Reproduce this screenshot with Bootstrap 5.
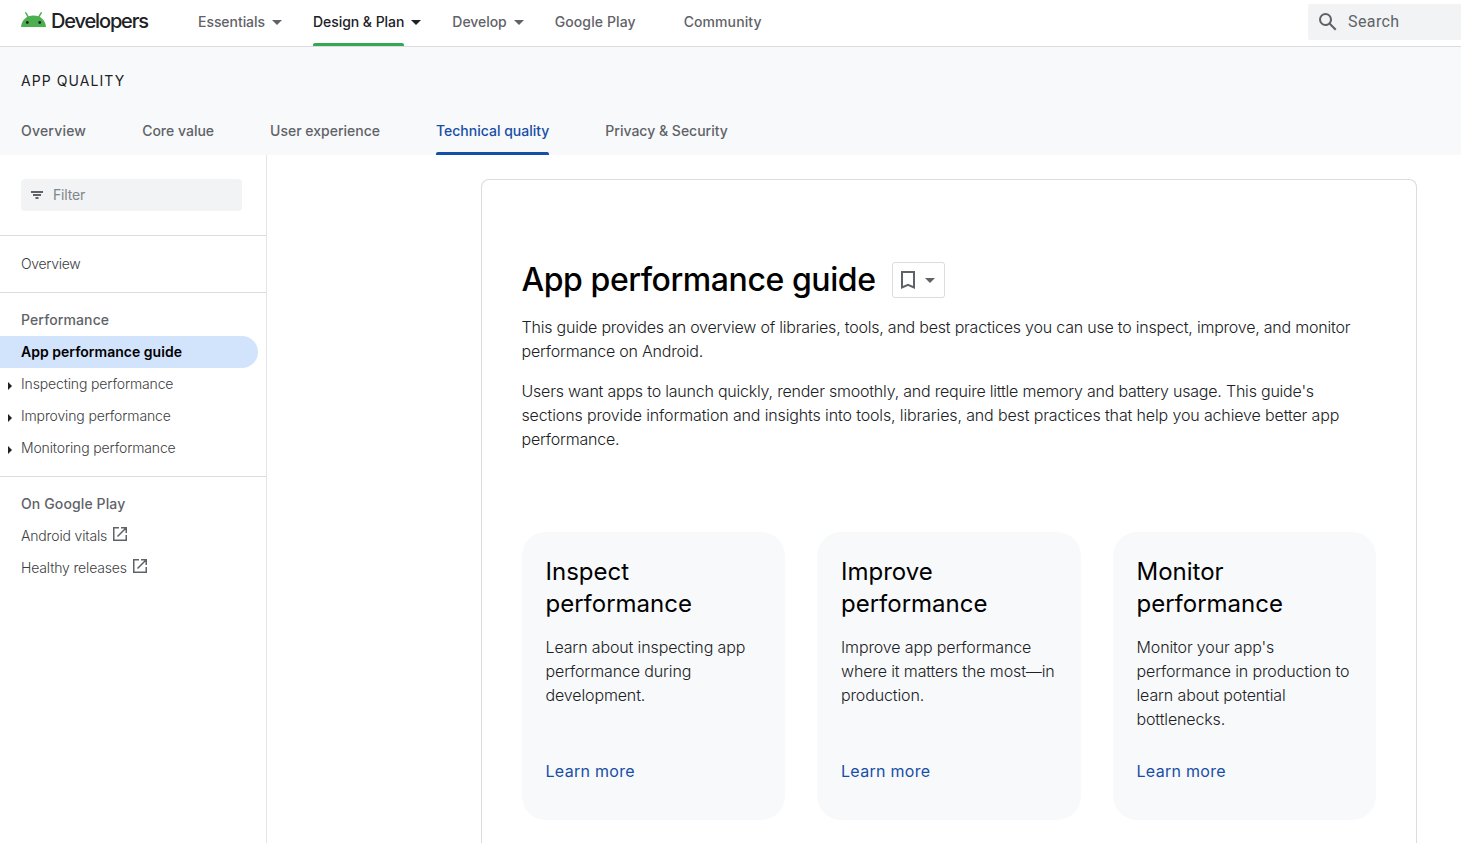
<!DOCTYPE html>
<html lang="en">
<head>
<meta charset="utf-8">
<meta name="viewport" content="width=device-width, initial-scale=1">
<title>App performance guide</title>
<link href="https://cdn.jsdelivr.net/npm/bootstrap@5.3.0/dist/css/bootstrap.min.css" rel="stylesheet">
<style>
body{font-family:Inter,"Liberation Sans",sans-serif;color:#202124;background:#fff;height:100vh;overflow:hidden;font-size:16px;line-height:24px}
a{color:inherit;text-decoration:none}
svg{display:block;flex:none}
.topbar{height:47px;border-bottom:1px solid #dadce0;padding-left:21px}
.brand{width:177px;height:40px;gap:5px;font-size:20px;font-weight:500;letter-spacing:-1.15px}
.brand svg{margin-top:-1px}
.brand span{padding-top:1px}
.tabs{gap:48px;font-size:14px;font-weight:500;color:#5f6368}
.tabs a{position:relative;display:flex;align-items:center;white-space:nowrap}
.topbar .tabs a{height:46px;padding-bottom:2px;letter-spacing:.1px}
.topbar .tabs .drop{letter-spacing:-.05px}
.topbar .tabs .drop::after{content:"";position:absolute;left:calc(100% + 7px);top:20px;border:5px solid transparent;border-top-color:currentColor;border-bottom:0}
.tabs .current::before{content:"";position:absolute;left:0;right:0;bottom:0;height:3px;border-radius:2px 2px 0 0;background:currentColor}
.topbar .tabs .current{color:#202124}
.topbar .tabs .current::before{background:#34a853}
.searchbox{width:153px;height:36px;margin-top:4px;background:#f1f3f4;border-radius:2px 0 0 2px;padding-left:8px;gap:8px;color:#5f6368;font-family:Roboto,sans-serif;letter-spacing:.4px}
.searchbox span{padding-bottom:1px}
.subbar{height:108px;background:#f8f9fb;padding:22px 21px 0}
.subbar h2{font-size:14px;line-height:24px;font-weight:400;letter-spacing:1.07px;margin:0 0 14px}
.subbar .tabs{gap:56px}
.subbar .tabs a{height:48px}
.subbar .tabs a:first-child{letter-spacing:.2px}
.subbar .tabs .current{color:#174ea6}
.side{width:267px;border-right:1px solid #e3e5e8;font-size:14px;color:#3c4043}
.filterbox{height:32px;margin:24px 24px 24px 21px;border-radius:4px;background:#f1f3f4;padding-left:8px;gap:8px;color:#80868b;letter-spacing:-.15px}
.side ul{border-top:1px solid #dadce0;padding:11px 0 12px}
.side ul:first-of-type{padding-top:12px;letter-spacing:-.3px}
.side li{height:32px;padding-left:21px;display:flex;align-items:center;position:relative;white-space:nowrap;font-weight:350;letter-spacing:-.16px}
.side ul:first-of-type li{letter-spacing:-.3px}
.side .group{font-weight:500;color:#5f6368;letter-spacing:.12px}
.side .active-page{background:#d2e3fc;color:#000;font-weight:600;border-radius:0 16px 16px 0;margin-right:8px;letter-spacing:.02px}
.side .expand{letter-spacing:-.14px}
.side .expand::before{content:"";position:absolute;left:8px;top:14px;border:4px solid transparent;border-left-color:#202124;border-right:0}
.side li svg{margin:-4px 0 0 5px}
.article{width:936px;margin:24px 0 0 214px;border:1px solid #dadce0;border-bottom:0;border-radius:8px 8px 0 0;padding:80px 40px 0 39.5px}
.article h1{font-size:32px;line-height:40px;font-weight:500;color:#000;margin:0;letter-spacing:-.43px}
.title-row{margin-bottom:15px}
.savebtn{width:53px;height:36px;border:1px solid #dadce0;border-radius:3px;background:#fff;color:#5f6368;padding:0 0 0 5px;margin-left:16px;gap:7px}
.caret-down{border:5px solid transparent;border-top-color:currentColor;border-bottom:0}
.article p{margin-bottom:16px;font-weight:300;letter-spacing:-.215px;white-space:nowrap}
.article p .wide{letter-spacing:-.135px}
.tiles{display:grid;grid-template-columns:repeat(3,1fr);gap:32px;padding-top:65px}
.tile{height:288px;border-radius:24px;background:#f8f9fb;padding:24px 24px 37px}
.tile h3{font-size:24px;line-height:32px;font-weight:400;color:#000;margin:0 0 15px}
.tile p{letter-spacing:-.13px}
.tile a{color:#174ea6;margin-top:auto;letter-spacing:.3px}
</style>
</head>
<body class="d-flex flex-column">
<header class="topbar d-flex flex-shrink-0 align-items-start">
  <a class="brand d-flex align-items-center" href="#">
    <svg width="25" height="15" viewBox="0 0 25 15"><path d="M4.800.9l2.900 4.800M20.200.9l-2.900 4.800" stroke="#4caf50" stroke-width="1.500" stroke-linecap="round"/><path d="M0 15C.6 8.200 5.500 3.500 12.500 3.500S24.400 8.200 25 15z" fill="#4caf50"/><circle cx="6.300" cy="10.500" r="1.400" fill="#202124"/><circle cx="18.700" cy="10.500" r="1.400" fill="#202124"/></svg>
    <span>Developers</span>
  </a>
  <nav class="tabs d-flex">
    <a class="drop" href="#">Essentials</a>
    <a class="drop current" href="#">Design &amp; Plan</a>
    <a class="drop" href="#">Develop</a>
    <a href="#">Google Play</a>
    <a href="#">Community</a>
  </nav>
  <div class="searchbox d-flex align-items-center ms-auto">
    <svg width="24" height="24" viewBox="0 0 24 24" fill="currentColor"><path d="M20.490 19l-5.730-5.730C15.530 12.200 16 10.910 16 9.500A6.500 6.500 0 1 0 9.500 16c1.410 0 2.700-.47 3.770-1.240L19 20.490 20.490 19zM5 9.500C5 7.010 7.010 5 9.500 5S14 7.010 14 9.500 11.990 14 9.500 14 5 11.990 5 9.500z"/></svg>
    <span>Search</span>
  </div>
</header>
<section class="subbar flex-shrink-0">
  <h2>APP QUALITY</h2>
  <nav class="tabs d-flex">
    <a href="#">Overview</a>
    <a href="#">Core value</a>
    <a href="#">User experience</a>
    <a class="current" href="#">Technical quality</a>
    <a href="#">Privacy &amp; Security</a>
  </nav>
</section>
<div class="d-flex flex-grow-1">
  <aside class="side flex-shrink-0">
    <div class="filterbox d-flex align-items-center">
      <svg width="16" height="16" viewBox="0 0 16 16" fill="#5f6368"><path d="M2 4h12v2H2zM4 7h8v2H4zM6.500 10h3v2h-3z"/></svg>
      <span>Filter</span>
    </div>
    <ul class="list-unstyled mb-0"><li>Overview</li></ul>
    <ul class="list-unstyled mb-0">
      <li class="group">Performance</li>
      <li class="active-page">App performance guide</li>
      <li class="expand">Inspecting performance</li>
      <li class="expand">Improving performance</li>
      <li class="expand">Monitoring performance</li>
    </ul>
    <ul class="list-unstyled mb-0">
      <li class="group">On Google Play</li>
      <li>Android vitals<svg width="16" height="16" viewBox="0 0 16 16" fill="none" stroke="#5f6368" stroke-width="1.500"><path d="M7 1.750H1.750v12.500h12.500V9M9 1.750h5.250V7M14 2L5.500 10.500"/></svg></li>
      <li>Healthy releases<svg width="16" height="16" viewBox="0 0 16 16" fill="none" stroke="#5f6368" stroke-width="1.500"><path d="M7 1.750H1.750v12.500h12.500V9M9 1.750h5.250V7M14 2L5.500 10.500"/></svg></li>
    </ul>
  </aside>
  <main class="article">
    <div class="title-row d-flex align-items-center">
      <h1>App performance guide</h1>
      <button class="savebtn d-flex align-items-center" type="button" aria-label="Save page"><svg width="20" height="20" viewBox="0 0 20 20" fill="none" stroke="currentColor" stroke-width="2"><path d="M4 2h12v15.500l-6-2.600-6 2.600z"/></svg><span class="caret-down"></span></button>
    </div>
    <p>This guide provides an overview of libraries, tools, and best practices you can use to inspect, improve, and monitor<br>performance on Android.</p>
    <p>Users want apps to launch quickly, render smoothly, and require little memory and battery usage. This guide's<br><span class="wide">sections provide information and insights into tools, libraries, and best practices that help you achieve better app</span><br>performance.</p>
    <div class="tiles">
      <section class="tile d-flex flex-column">
        <h3>Inspect<br>performance</h3>
        <p>Learn about inspecting app<br>performance during<br>development.</p>
        <a href="#">Learn more</a>
      </section>
      <section class="tile d-flex flex-column">
        <h3>Improve<br>performance</h3>
        <p>Improve app performance<br>where it matters the most—in<br>production.</p>
        <a href="#">Learn more</a>
      </section>
      <section class="tile d-flex flex-column">
        <h3>Monitor<br>performance</h3>
        <p>Monitor your app's<br>performance in production to<br>learn about potential<br>bottlenecks.</p>
        <a href="#">Learn more</a>
      </section>
    </div>
  </main>
</div>
<script src="https://cdn.jsdelivr.net/npm/bootstrap@5.3.0/dist/js/bootstrap.bundle.min.js"></script>
</body>
</html>
